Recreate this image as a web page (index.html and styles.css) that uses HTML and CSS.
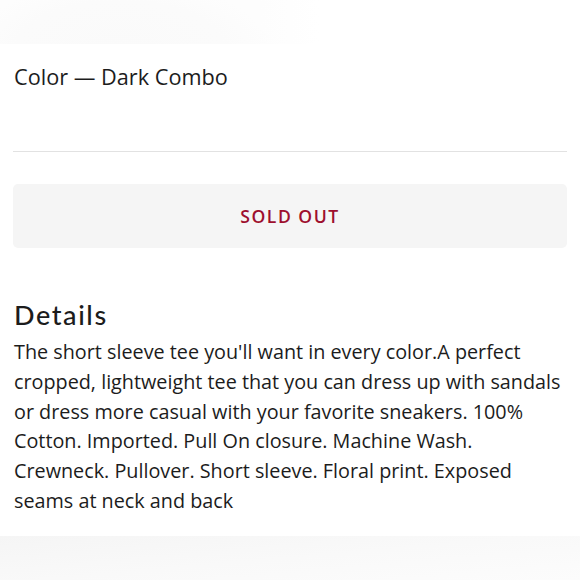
FILE: index.html
```html
<!DOCTYPE html>
<html>
<head>
<meta charset="utf-8">
<link rel="stylesheet" href="styles.css">
</head>
<body>
<div class="top-fade"></div>
<main class="content">
  <p class="color">Color — Dark Combo</p>
  <hr class="divider">
  <button class="soldout">SOLD OUT</button>
  <h2 class="details-title">Details</h2>
  <p class="details-text">The short sleeve tee you'll want in every color.A perfect cropped, lightweight tee that you can dress up with sandals or dress more casual with your favorite sneakers. 100% Cotton. Imported. Pull On closure. Machine Wash. Crewneck. Pullover. Short sleeve. Floral print. Exposed seams at neck and back</p>
</main>
<div class="bottom-fade"></div>
</body>
</html>
```
FILE: styles.css
```css
html, body {
  margin: 0;
  padding: 0;
  background: #ffffff;
  width: 580px;
  height: 580px;
  overflow: hidden;
}
body {
  font-family: "Open Sans", "Noto Sans", sans-serif;
  color: #1c1c1c;
  display: flex;
  flex-direction: column;
}
.top-fade {
  height: 44px;
  background:
    radial-gradient(ellipse 150px 70px at 120px 50px, #fafafa 0%, #fbfbfb 70%, rgba(253,253,253,0) 100%),
    linear-gradient(90deg, #fdfdfd 0%, #fdfdfd 45%, #ffffff 55%);
}
.content {
  padding: 0 13px 0 14px;
  flex: 1;
}
.color {
  margin: 19px 0 0;
  font-size: 21.7px;
  line-height: 28px;
}
.divider {
  border: 0;
  border-top: 1px solid #e2e2e2;
  margin: 60px 0 0 -1px;
}
.soldout {
  display: block;
  width: calc(100% + 1px);
  margin: 32px 0 0 -1px;
  height: 64px;
  border: 0;
  border-radius: 5px;
  background: #f5f5f5;
  color: #9e0f2e;
  font-family: "Open Sans", sans-serif;
  font-size: 17.6px;
  font-weight: 600;
  letter-spacing: 1.5px;
}
.details-title {
  margin: 50px 0 0;
  font-family: "Lato", "Open Sans", sans-serif;
  font-weight: 500;
  font-size: 27px;
  letter-spacing: 1.6px;
  line-height: 34px;
}
.details-text {
  margin: 5px 0 0;
  font-size: 19.8px;
  line-height: 29.8px;
}
.bottom-fade {
  height: 44px;
  background: linear-gradient(175deg, #f5f5f5 0%, #f9f9f9 50%, #fcfcfc 100%);
}
```
